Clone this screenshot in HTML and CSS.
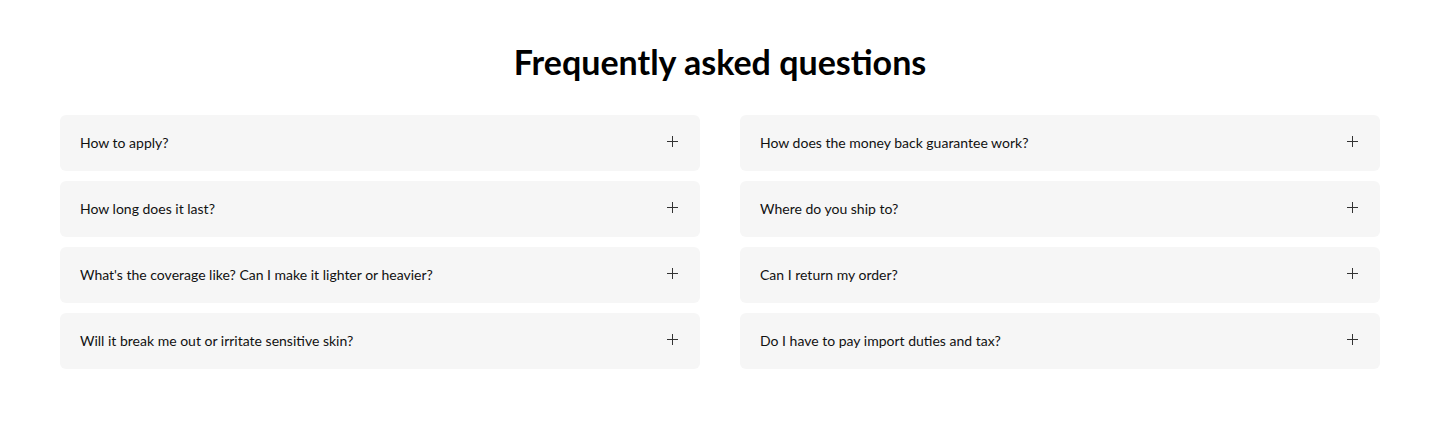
FILE: index.html
```html
<!DOCTYPE html>
<html lang="en">

<head>
    <meta charset="UTF-8">
    <meta name="viewport" content="width=device-width, initial-scale=1.0">
    <title>FAQ</title>
    <link rel="stylesheet" href="styles.css">
</head>

<body>
    <section class="faq">
        <h2 class="faq-title">Frequently asked questions</h2>
        <div class="faq-grid">
            <div class="faq-col">
                <div class="faq-item"><span>How to apply?</span><i class="plus"></i></div>
                <div class="faq-item"><span>How long does it last?</span><i class="plus"></i></div>
                <div class="faq-item"><span>What's the coverage like? Can I make it lighter or heavier?</span><i class="plus"></i></div>
                <div class="faq-item"><span>Will it break me out or irritate sensitive skin?</span><i class="plus"></i></div>
            </div>
            <div class="faq-col">
                <div class="faq-item"><span>How does the money back guarantee work?</span><i class="plus"></i></div>
                <div class="faq-item"><span>Where do you ship to?</span><i class="plus"></i></div>
                <div class="faq-item"><span>Can I return my order?</span><i class="plus"></i></div>
                <div class="faq-item"><span>Do I have to pay import duties and tax?</span><i class="plus"></i></div>
            </div>
        </div>
    </section>
</body>

</html>
```

FILE: styles.css
```css
body {
    margin: 0;
    background: #fff;
    color: #111;
    font-family: Lato, "Open Sans", sans-serif;
}

.faq {
    padding: 42px 60px 60px;
}

.faq-title {
    margin: 0 0 33px;
    font-size: 34px;
    line-height: 40px;
    font-weight: 700;
    text-align: center;
    color: #000;
    letter-spacing: 0;
}

.faq-grid {
    display: grid;
    grid-template-columns: 1fr 1fr;
    gap: 40px;
}

.faq-col {
    display: flex;
    flex-direction: column;
    gap: 10px;
}

.faq-item {
    display: flex;
    align-items: center;
    justify-content: space-between;
    height: 56px;
    padding: 0 22px 2px 20px;
    box-sizing: border-box;
    background: #f6f6f6;
    border-radius: 6px;
    font-size: 14px;
}

.plus {
    position: relative;
    width: 11px;
    height: 11px;
    margin-top: -1px;
}

.plus::before,
.plus::after {
    content: "";
    position: absolute;
    background: #333;
}

.plus::before {
    left: 0;
    top: 5px;
    width: 11px;
    height: 1px;
}

.plus::after {
    left: 5px;
    top: 0;
    width: 1px;
    height: 11px;
}
```
